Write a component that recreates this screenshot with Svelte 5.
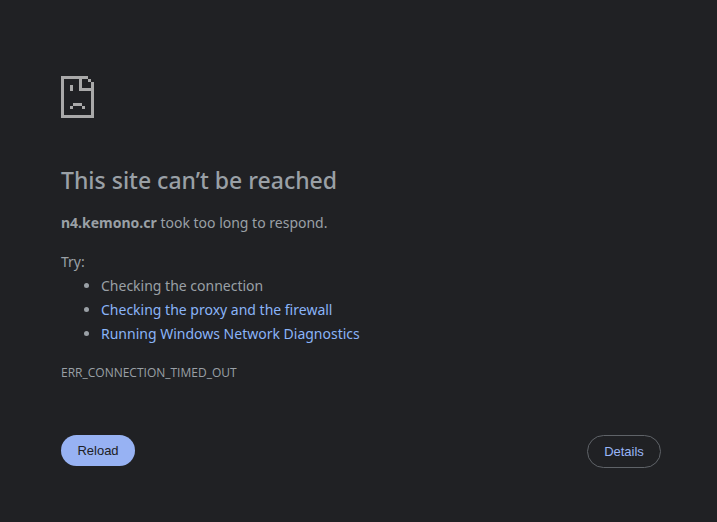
<script>
  const host = 'n4.kemono.cr';
  const reload = () => location.reload();
</script>

<main>
  <div class="content">
    <svg class="icon" viewBox="0 0 11 14" width="33" height="42" shape-rendering="crispEdges" aria-hidden="true">
      <path d="M0 0H9V1H7V4H10V2H11V14H0ZM1 1V13H10V5H6V1ZM9 1H10V2H9ZM3 3H4V5H3ZM4 9H7V10H4ZM3 10H4V11H3ZM7 10H8V11H7Z" fill="#a9a9a9" fill-rule="evenodd" />
    </svg>
    <h1>This site can’t be reached</h1>
    <p><strong>{host}</strong> took too long to respond.</p>
    <div class="suggestions">
      <p>Try:</p>
      <ul>
        <li>Checking the connection</li>
        <li><a href="#proxy">Checking the proxy and the firewall</a></li>
        <li><a href="#diagnostics">Running Windows Network Diagnostics</a></li>
      </ul>
    </div>
    <div class="code">ERR_CONNECTION_TIMED_OUT</div>
    <div class="buttons">
      <button class="reload" onclick={reload}>Reload</button>
      <button class="details">Details</button>
    </div>
  </div>
</main>

<style>
  :global(body) {
    margin: 0;
    background: #202124;
  }
  main {
    box-sizing: border-box;
    min-height: 100vh;
    padding: 76px 56px 48px 61px;
    background: #202124;
    color: #9aa0a6;
    font: 14px/24px 'Noto Sans', 'Open Sans', sans-serif;
  }
  .content {
    max-width: 600px;
  }
  .icon {
    display: block;
  }
  h1 {
    margin: 48px 0 16px;
    font-size: 23px;
    font-weight: 500;
    line-height: 29px;
  }
  p {
    margin: 0;
  }
  .suggestions {
    margin-top: 15px;
  }
  ul {
    margin: 0;
    padding-left: 40px;
  }
  a {
    color: #8ab4f8;
    text-decoration: none;
  }
  .code {
    margin-top: 15px;
    font-family: 'Open Sans', 'Noto Sans', sans-serif;
    font-size: 12px;
  }
  .buttons {
    display: flex;
    justify-content: space-between;
    align-items: flex-start;
    margin-top: 50px;
  }
  button {
    min-width: 74px;
    padding: 8px 16px;
    border: 0;
    border-radius: 20px;
    font: 13px/15px 'Liberation Sans', Arial, sans-serif;
    cursor: pointer;
  }
  .reload {
    background: #97b2f3;
    color: #202124;
  }
  .details {
    border: 1px solid #5f6368;
    background: transparent;
    color: #99b5f7;
  }
</style>
